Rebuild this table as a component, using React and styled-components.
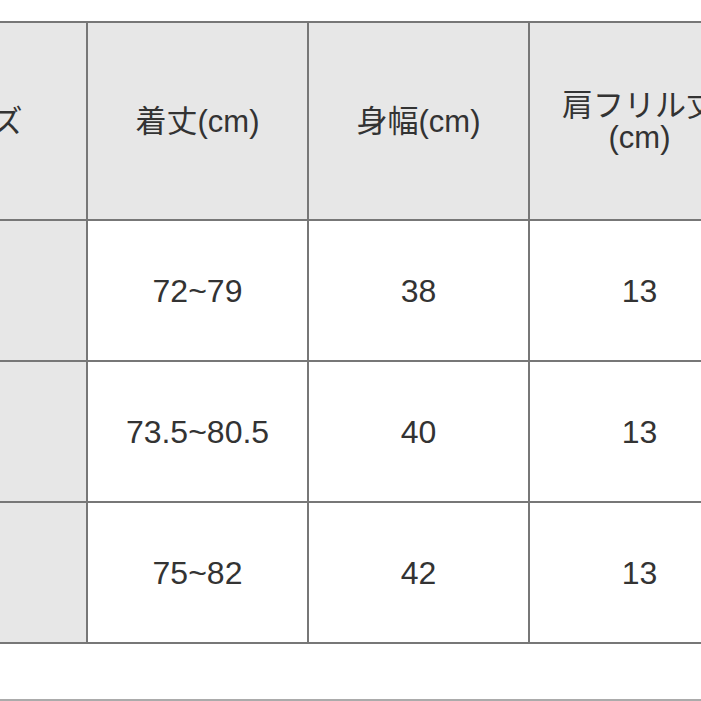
import React from "react";
import styled, { createGlobalStyle } from "styled-components";

const GlobalStyle = createGlobalStyle`
  html, body {
    margin: 0;
    padding: 0;
    background: #ffffff;
    overflow: hidden;
  }
  body {
    font-family: "Liberation Sans", "Noto Sans CJK JP", sans-serif;
    color: #333333;
  }
`;

const Page = styled.div`
  width: 701px;
  height: 701px;
  padding-top: 21px;
  box-sizing: border-box;
  overflow: hidden;
`;

const SizeTable = styled.div`
  display: grid;
  grid-template-columns: repeat(4, 219px);
  grid-template-rows: 196px 139px 139px 139px;
  gap: 2px;
  padding: 2px;
  width: max-content;
  margin-left: -135px;
  background: #777777;
`;

const Cell = styled.div`
  display: flex;
  flex-direction: column;
  align-items: center;
  justify-content: center;
  text-align: center;
  background: ${(p) => (p.$shaded ? "#e7e7e7" : "#ffffff")};
  font-size: ${(p) => (p.$head ? "31px" : "32px")};
  line-height: ${(p) => (p.$head ? "32px" : "36px")};
  padding-top: ${(p) => (p.$head ? "2px" : "0")};
  white-space: nowrap;
  color: #333333;
`;

const Divider = styled.div`
  margin-top: 55px;
  height: 2px;
  background: #ababab;
`;

const headers = [["サイズ"], ["着丈(cm)"], ["身幅(cm)"], ["肩フリル丈", "(cm)"]];

const rows = [
  ["S", "72~79", "38", "13"],
  ["M", "73.5~80.5", "40", "13"],
  ["L", "75~82", "42", "13"],
];

export default function App() {
  return (
    <Page>
      <GlobalStyle />
      <SizeTable>
        {headers.map((lines, i) => (
          <Cell key={`h${i}`} $head $shaded>
            {lines.map((l) => (
              <span key={l}>{l}</span>
            ))}
          </Cell>
        ))}
        {rows.map((row, r) =>
          row.map((value, c) => (
            <Cell key={`${r}-${c}`} $shaded={c === 0}>
              {c === 0 ? "" : value}
            </Cell>
          ))
        )}
      </SizeTable>
      <Divider />
    </Page>
  );
}
